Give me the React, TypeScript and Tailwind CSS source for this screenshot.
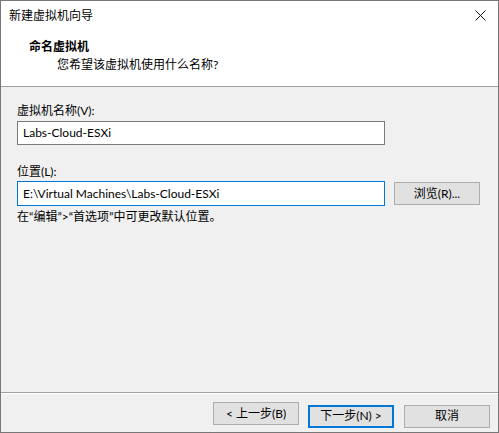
import React from 'react';

const font = "font-['Segoe_UI','Lato','Noto_Sans_CJK_SC',sans-serif]";

const WinButton: React.FC<{ label: string; primary?: boolean }> = ({ label, primary }) => (
  <button
    className={
      primary
        ? 'w-[86px] h-[23px] bg-[#e1e1e1] border-2 border-[#0078d7] text-[12px] text-black leading-none'
        : 'w-[86px] h-[23px] bg-[#e1e1e1] border border-[#adadad] text-[12px] text-black leading-none'
    }
  >
    {label}
  </button>
);

export default function App() {
  return (
    <div className={`w-[499px] h-[433px] flex flex-col border border-[#777777] bg-[#f0f0f0] text-black ${font}`}>
      {/* Title bar */}
      <div className="h-[29px] bg-white flex items-center justify-between pl-2 pr-[10px] shrink-0">
        <span className="text-[12px] leading-4">新建虚拟机向导</span>
        <svg width="11" height="11" viewBox="0 0 11 11" className="mr-[2px]">
          <path d="M0.5 0.5 L10.5 10.5 M10.5 0.5 L0.5 10.5" stroke="#111" strokeWidth="1" />
        </svg>
      </div>

      {/* Header */}
      <div className="h-[57px] bg-white border-b border-[#a0a0a0] shrink-0 pt-[9px]">
        <div className="pl-[28px] text-[12px] font-bold leading-4">命名虚拟机</div>
        <div className="pl-[56px] mt-[2px] text-[12px] leading-4">您希望该虚拟机使用什么名称?</div>
      </div>

      {/* Body */}
      <div className="flex-1 px-4 pt-[16px] text-[12px]">
        <div className="leading-4">虚拟机名称(V):</div>
        <div className="mt-[2px] w-[368px] h-[24px] bg-white border border-[#7a7a7a] flex items-center px-[5px] leading-4">
          Labs-Cloud-ESXi
        </div>

        <div className="mt-[19px] leading-4">位置(L):</div>
        <div className="mt-[1px] flex items-center gap-[9px]">
          <div className="w-[368px] h-[25px] bg-white border border-[#0078d7] flex items-center px-[5px] leading-4">
            E:\Virtual Machines\Labs-Cloud-ESXi
          </div>
          <button className="w-[86px] h-[23px] bg-[#e1e1e1] border border-[#adadad] text-[12px] leading-none">
            浏览(R)...
          </button>
        </div>
        <div className="mt-[3px] leading-4">在“编辑”&gt;“首选项”中可更改默认位置。</div>
      </div>

      {/* Footer */}
      <div className="h-[40px] shrink-0 border-t border-[#a0a0a0]">
        <div className="border-t border-white h-full flex justify-end items-start pt-[8px] pr-[8px]">
          <WinButton label="< 上一步(B)" />
          <div className="ml-[9px]">
            <WinButton label="下一步(N) >" primary />
          </div>
          <div className="ml-[10px]">
            <WinButton label="取消" />
          </div>
        </div>
      </div>
    </div>
  );
}
